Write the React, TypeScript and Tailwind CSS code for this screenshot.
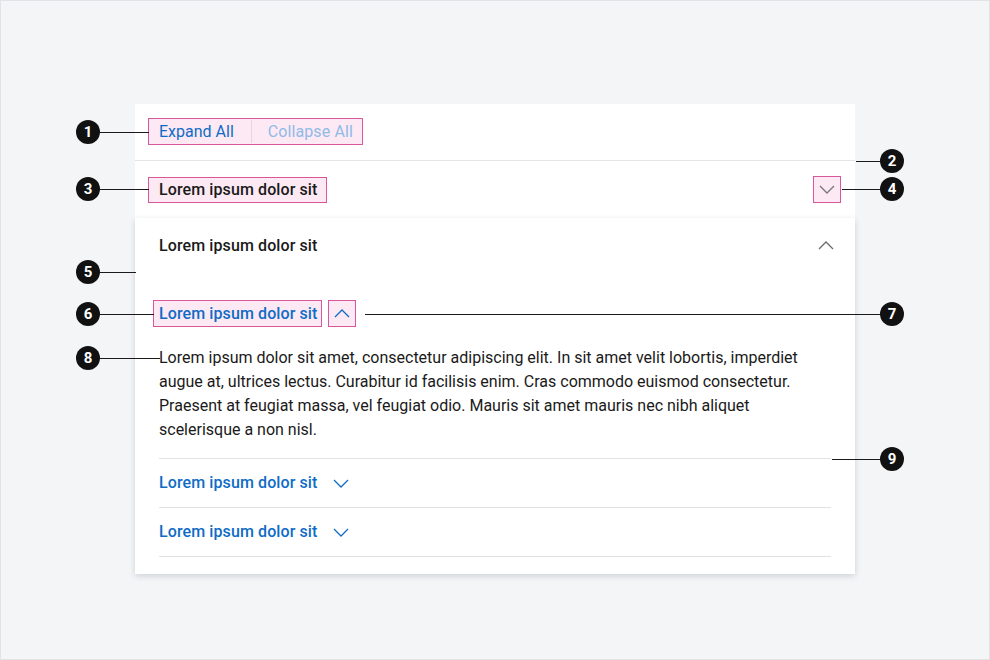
import React from 'react'

function Chevron({ up = false, className = '' }: { up?: boolean; className?: string }) {
  return (
    <svg width="16" height="9" viewBox="0 0 16 9" className={className} fill="none">
      <polyline
        points={up ? '1,8 8,1 15,8' : '1,1 8,8 15,1'}
        stroke="currentColor"
        strokeWidth="1.3"
        strokeLinejoin="miter"
      />
    </svg>
  )
}

interface Callout {
  n: number
  y: number
  side: 'left' | 'right'
  to: number
}

const CALLOUTS: Callout[] = [
  { n: 1, y: 131, side: 'left', to: 148 },
  { n: 2, y: 160, side: 'right', to: 855 },
  { n: 3, y: 188, side: 'left', to: 148 },
  { n: 4, y: 188, side: 'right', to: 841 },
  { n: 5, y: 271, side: 'left', to: 135 },
  { n: 6, y: 313, side: 'left', to: 153 },
  { n: 7, y: 313, side: 'right', to: 364 },
  { n: 8, y: 357, side: 'left', to: 159 },
  { n: 9, y: 458, side: 'right', to: 831 },
]

function Marker({ c }: { c: Callout }) {
  const cx = c.side === 'left' ? 87 : 891
  const x1 = Math.min(cx, c.to)
  const w = Math.abs(cx - c.to)
  return (
    <>
      <div className="absolute h-px bg-[#1a1a1a]" style={{ left: x1, top: c.y - 0.5, width: w }} />
      <div
        className="absolute w-[24px] h-[24px] rounded-full bg-[#111] text-white flex items-center justify-center text-[15px] font-bold"
        style={{ left: cx - 12, top: c.y - 12 }}
      >
        {c.n}
      </div>
    </>
  )
}

export default function App() {
  const blue = 'text-[#0f6cc6]'
  return (
    <div className="relative w-[990px] h-[660px] bg-[#f4f5f7] border border-[#e2e3e6] font-['Roboto',sans-serif] text-[16px] text-[#1a1a1a] overflow-hidden">
      <div className="pt-[103px] pl-[134px]">
        <div className="w-[720px] bg-white">
          {/* toolbar */}
          <div className="h-[57px] border-b border-[#e4e4e4] flex items-center pl-[13px]">
            <div className="flex items-stretch h-[27px] -mt-[1px] border border-[#d9579b] bg-[#fde9f3]">
              <button className={`pl-[10px] pr-[17px] ${blue}`}>Expand All</button>
              <div className="w-px my-[1px] bg-[#e8d3de]" />
              <button className="pl-[16px] pr-[9px] text-[#8fbbe8] tracking-[0.1px]">Collapse All</button>
            </div>
          </div>

          {/* collapsed item */}
          <div className="h-[57px] flex items-center justify-between pl-[13px] pr-[14px]">
            <div className="h-[26px] flex items-center border border-[#d9579b] bg-[#fde9f3] pl-[10px] pr-[9px] font-medium tracking-[0.1px]">
              Lorem ipsum dolor sit
            </div>
            <div className="w-[28px] h-[27px] flex items-center justify-center border border-[#d9579b] bg-[#fde9f3] text-[#777]">
              <Chevron />
            </div>
          </div>

          {/* expanded item */}
          <div className="bg-white shadow-[0_2px_6px_rgba(40,50,70,0.18)] px-[24px] pb-[17px]">
            <div className="h-[55px] flex items-center justify-between">
              <span className="font-medium tracking-[0.1px]">Lorem ipsum dolor sit</span>
              <Chevron up className="text-[#6b6b6b] mr-[-3px]" />
            </div>

            <div className="pt-[27px] flex items-center">
              <div className={`-ml-[6px] h-[27px] flex items-center border border-[#d9579b] bg-[#fde9f3] pl-[5px] pr-[4px] font-medium tracking-[0.1px] ${blue}`}>
                Lorem ipsum dolor sit
              </div>
              <div className={`ml-[6px] w-[28px] h-[27px] flex items-center justify-center border border-[#d9579b] bg-[#fde9f3] ${blue}`}>
                <Chevron up />
              </div>
            </div>

            <p className="mt-[19px] leading-[24px] pb-[16px] border-b border-[#e2e2e2]">
              Lorem ipsum dolor sit amet, consectetur adipiscing elit. In sit amet velit lobortis, imperdiet
              augue at, ultrices lectus. Curabitur id facilisis enim. Cras commodo euismod consectetur.
              Praesent at feugiat massa, vel feugiat odio. Mauris sit amet mauris nec nibh aliquet
              scelerisque a non nisl.
            </p>

            {[0, 1].map(i => (
              <div key={i} className={`h-[49px] flex items-center border-b border-[#e2e2e2] font-medium ${blue}`}>
                <span className="tracking-[0.1px]">Lorem ipsum dolor sit</span>
                <Chevron className="ml-[16px]" />
              </div>
            ))}
          </div>
        </div>
      </div>

      {CALLOUTS.map(c => (
        <Marker key={c.n} c={c} />
      ))}
    </div>
  )
}
